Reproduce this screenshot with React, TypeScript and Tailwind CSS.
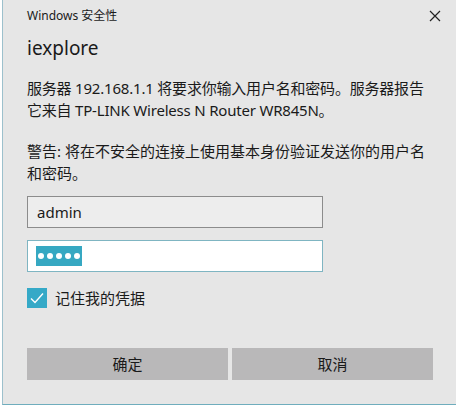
import React from 'react';

const font = { fontFamily: '"Segoe UI", "Noto Sans", "Noto Sans CJK SC", sans-serif' };

export default function App() {
    return (
        <div className="w-[456px] h-[416px] bg-white overflow-hidden text-[#1a1a1a]" style={font}>
            <div className="ml-[2px] h-[405px] bg-[#e6e6e6] border-l border-b border-l-[#9cc0cc] border-b-[#6fadbd] pl-[24px] pr-[23px] flex flex-col">
                <div className="flex items-center justify-between mt-[6px] h-[20px]">
                    <span className="text-[12px] leading-[20px]">Windows 安全性</span>
                    <svg width="12" height="12" viewBox="0 0 12 12" className="-mr-[8px]">
                        <path d="M1 1 L11 11 M11 1 L1 11" stroke="#222" strokeWidth="1.2" />
                    </svg>
                </div>
                <div className="mt-[8px] text-[19px] leading-[28px]">iexplore</div>
                <div className="mt-[15px] text-[15px] leading-[22px] whitespace-nowrap tracking-[-0.2px]">
                    <div>服务器 192.168.1.1 将要求你输入用户名和密码。服务器报告</div>
                    <div>它来自 TP-LINK Wireless N Router WR845N。</div>
                </div>
                <div className="mt-[19px] text-[15px] leading-[22px] whitespace-nowrap">
                    <div>警告: 将在不安全的连接上使用基本身份验证发送你的用户名</div>
                    <div>和密码。</div>
                </div>
                <div className="mt-[12px] w-[296px] h-[32px] border border-[#8c8c8c] bg-[#ededed] flex items-center px-[9px] text-[15px]">
                    admin
                </div>
                <div className="mt-[12px] w-[296px] h-[32px] border border-[#7fb5c2] bg-white flex items-center px-[8px]">
                    <span className="bg-[#36a8c2] h-[20px] px-[2px] flex items-center gap-[3px]">
                        {[0, 1, 2, 3, 4].map((i) => (
                            <span key={i} className="w-[6px] h-[6px] rounded-full bg-white" />
                        ))}
                    </span>
                </div>
                <div className="mt-[16px] flex items-center gap-[8px]">
                    <div className="w-[20px] h-[20px] bg-[#35a9c7] flex items-center justify-center">
                        <svg width="16" height="16" viewBox="0 0 16 16">
                            <path d="M2 8.5 L6 12.5 L14 3.5" stroke="white" strokeWidth="1.4" fill="none" />
                        </svg>
                    </div>
                    <span className="text-[15px] leading-[20px]">记住我的凭据</span>
                </div>
                <div className="mt-[40px] flex gap-[4px]">
                    <button className="flex-1 h-[32px] bg-[#b9b8b9] text-[15px]">确定</button>
                    <button className="flex-1 h-[32px] bg-[#b9b8b9] text-[15px]">取消</button>
                </div>
            </div>
        </div>
    );
}
